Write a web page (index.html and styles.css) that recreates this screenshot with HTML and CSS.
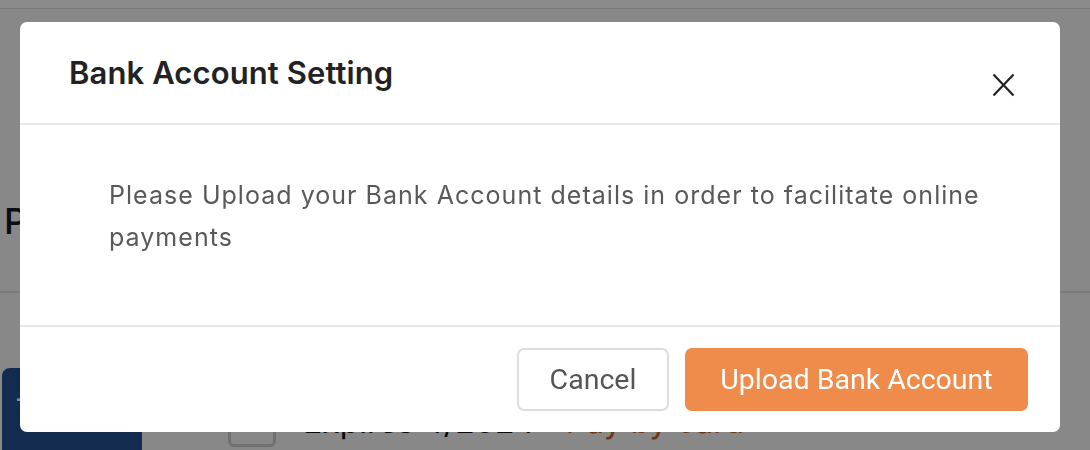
FILE: index.html
```html
<html>
  <head>
    <title>Bank Account Setting</title>
    <link rel="stylesheet" href="styles.css">
  </head>
  <body>
    <div class="page">
      <div class="topbar"></div>
      <div class="page-head">
        <h1 class="page-title">Payment Methods</h1>
      </div>
      <div class="card-row">
        <div class="add-btn">+</div>
        <div class="check"></div>
        <div class="card-text">Expires 4/2024 <span class="card-note">Pay by card</span></div>
      </div>
    </div>

    <div class="overlay">
      <div class="modal">
        <div class="modal-header">
          <h2 class="modal-title">Bank Account Setting</h2>
          <button class="close" aria-label="Close">
            <svg width="23" height="24" viewBox="0 0 23 24">
              <path d="M1.5 1.5 L21.5 22.5 M21.5 1.5 L1.5 22.5" stroke="#222" stroke-width="2.2" fill="none"/>
            </svg>
          </button>
        </div>
        <div class="modal-body">
          <p>Please Upload your Bank Account details in order to facilitate online payments</p>
        </div>
        <div class="modal-footer">
          <button class="btn btn-cancel">Cancel</button>
          <button class="btn btn-primary">Upload Bank Account</button>
        </div>
      </div>
    </div>
  </body>
</html>
```

FILE: styles.css
```css
body {
  margin: 0;
  font-family: Inter, "Noto Sans", sans-serif;
  background-color: #f9f9f9;
  overflow: hidden;
}

/* page behind the dialog */
.page {
  height: 450px;
  overflow: hidden;
}

.topbar {
  height: 8px;
  background-color: #ffffff;
  border-bottom: 1px solid #dcdcdc;
}

.page-head {
  height: 282px;
  border-bottom: 2px solid #e2e2e2;
  padding: 0 0 0 4px;
}

.page-title {
  margin: 0;
  padding-top: 190px;
  font-size: 36px;
  font-weight: 500;
  color: #111827;
}

.card-row {
  display: flex;
  align-items: flex-start;
  padding: 75px 0 0 2px;
}

.add-btn {
  width: 140px;
  height: 120px;
  flex-shrink: 0;
  background-color: #244f92;
  border-radius: 8px;
  color: #ffffff;
  font-size: 32px;
  padding: 10px 0 0 12px;
  box-sizing: border-box;
}

.check {
  width: 48px;
  height: 48px;
  flex-shrink: 0;
  margin: 31px 0 0 86px;
  border: 3px solid #cfcfcf;
  border-radius: 6px;
  box-sizing: border-box;
}

.card-text {
  margin: 34px 0 0 27px;
  font-size: 32px;
  color: #111111;
  white-space: nowrap;
}

.card-note {
  color: #c8641e;
  margin-left: 22px;
}

/* dialog */
.overlay {
  position: fixed;
  left: 0;
  top: 0;
  right: 0;
  bottom: 0;
  background-color: rgba(0, 0, 0, 0.455);
  display: flex;
  justify-content: flex-start;
  align-items: flex-start;
  padding: 22px 0 0 20px;
}

.modal {
  width: 1040px;
  height: 410px;
  background-color: #ffffff;
  border-radius: 7px;
  display: flex;
  flex-direction: column;
}

.modal-header {
  height: 101px;
  border-bottom: 2px solid #e6e6e6;
  display: flex;
  align-items: flex-start;
  justify-content: space-between;
  padding: 0 45px 0 49px;
}

.modal-title {
  margin: 32px 0 0 0;
  font-size: 31px;
  font-weight: 600;
  color: #222222;
  letter-spacing: 0.1px;
}

.close {
  margin-top: 51px;
  padding: 0;
  border: none;
  background: none;
  width: 23px;
  height: 24px;
}

.modal-body {
  height: 202px;
  border-bottom: 2px solid #e6e6e6;
  padding: 0 40px 0 89px;
  box-sizing: border-box;
}

.modal-body p {
  margin: 49px 0 0 0;
  font-size: 25px;
  letter-spacing: 1.03px;
  line-height: 42px;
  color: #595959;
}

.modal-footer {
  flex: 1;
  display: flex;
  justify-content: flex-end;
  align-items: center;
  gap: 16px;
  padding: 0 32px;
}

.btn {
  height: 63px;
  border-radius: 7px;
  font-family: Roboto, "Noto Sans", sans-serif;
  font-size: 28.5px;
  padding: 0;
}

.btn-cancel {
  width: 152px;
  background-color: #ffffff;
  border: 2px solid #dddddd;
  color: #555555;
}

.btn-primary {
  width: 343px;
  background-color: #ef8b4b;
  border: none;
  color: #ffffff;
}
```
